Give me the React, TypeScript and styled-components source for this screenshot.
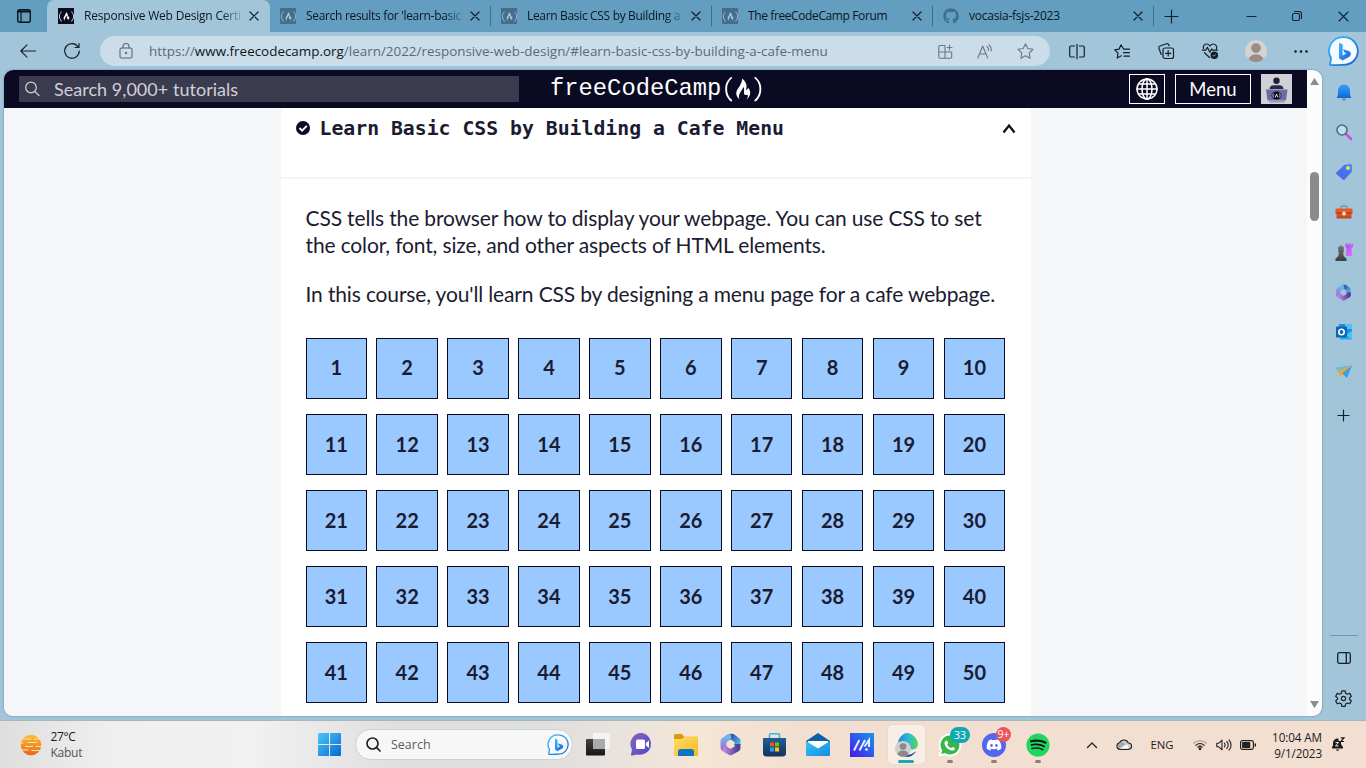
import React from "react";
import styled, { createGlobalStyle, css } from "styled-components";
import { FaFreeCodeCamp, FaGithub, FaDiscord, FaSpotify } from "react-icons/fa";

const ui = `"Open Sans", "Noto Sans", sans-serif`;
const lato = `Lato, "Open Sans", sans-serif`;

const Global = createGlobalStyle`
  * { box-sizing: border-box; }
  html, body { margin: 0; padding: 0; }
  body { width: 1366px; height: 768px; overflow: hidden; font-family: ${ui}; color: #111; }
  svg { display: block; flex: none; overflow: visible; }
`;

const Desktop = styled.div`
  width: 1366px;
  height: 768px;
  display: flex;
  flex-direction: column;
  overflow: hidden;
`;

/* ---------- browser chrome ---------- */

const TabStrip = styled.div`
  height: 32px;
  flex: none;
  display: flex;
  background: #639dc0;
`;

const StripButton = styled.div<{ $w: number }>`
  width: ${(p) => p.$w}px;
  display: flex;
  align-items: center;
  justify-content: center;
`;

const Tab = styled.div<{ $active?: boolean }>`
  width: 221px;
  flex: none;
  display: flex;
  align-items: center;
  padding: 0 8px 0 10px;
  position: relative;
  ${(p) =>
    p.$active
      ? css`
          width: 223px;
          padding: 0 8px 0 11px;
          background: #a3c5da;
          border-radius: 7px 7px 0 0;
        `
      : css`
          &::after {
            content: "";
            position: absolute;
            right: 0;
            top: 6px;
            width: 1px;
            height: 20px;
            background: #3f6d8a;
          }
        `}
`;

const Favicon = styled.div<{ $dim?: boolean }>`
  width: 16px;
  height: 16px;
  display: flex;
  align-items: center;
  justify-content: center;
  background: ${(p) => (p.$dim ? "#436e8d" : "#0a0a23")};
  color: ${(p) => (p.$dim ? "#a9c9dc" : "#fff")};
`;

const TabTitle = styled.div<{ $fade?: boolean; $spacing?: number }>`
  flex: 1;
  margin-left: 10px;
  font-size: 12px;
  line-height: 16px;
  letter-spacing: ${(p) => p.$spacing ?? 0}px;
  white-space: nowrap;
  color: #0b1720;
  ${(p) => p.$fade && css`mask-image: linear-gradient(90deg, #000 138px, transparent 160px);`}
`;

const TabClose = styled.div`
  width: 16px;
  display: flex;
  justify-content: center;
`;

const WindowControls = styled.div`
  margin-left: auto;
  display: flex;
`;

const Toolbar = styled.div`
  height: 38px;
  flex: none;
  display: flex;
  align-items: center;
  background: #a3c5da;
  padding-left: 6px;
`;

const ToolSlot = styled.div<{ $w?: number }>`
  width: ${(p) => p.$w ?? 44.8}px;
  flex: none;
  display: flex;
  align-items: center;
  justify-content: center;
`;

const AddressBar = styled.div`
  width: 950px;
  height: 30px;
  margin: 0 4.6px 0 6px;
  flex: none;
  display: flex;
  align-items: center;
  border-radius: 15px;
  background: #cbdde9;
  padding: 0 5px 0 19px;
`;

const Url = styled.div`
  margin-left: 16px;
  flex: 1;
  font-size: 13.4px;
  letter-spacing: 0.02px;
  color: #5b6b75;
  white-space: nowrap;
  b { font-weight: 400; color: #0c151b; }
`;

const Body = styled.div`
  height: 651px;
  flex: none;
  display: flex;
  background: #a3c5da;
  padding: 0 0 5px 4px;
  border-bottom: 1px solid #a9b6be;
`;

const Viewport = styled.div`
  width: 1318px;
  height: 646px;
  flex: none;
  display: flex;
  overflow: hidden;
  border-radius: 9px;
  background: #fcfcfd;
  box-shadow: 0 0 2px rgba(20, 50, 80, 0.5);
`;

const Page = styled.div`
  width: 1303px;
  display: flex;
  flex-direction: column;
  background: #f5f6f7;
`;

const ScrollTrack = styled.div`
  width: 15px;
  display: flex;
  flex-direction: column;
  align-items: center;
  justify-content: space-between;
  padding: 8px 0;
`;

const ScrollThumb = styled.div`
  width: 9px;
  height: 49px;
  margin: 87px 0 auto;
  border-radius: 5px;
  background: #8b8b8b;
`;

const Sidebar = styled.div`
  width: 43px;
  height: 648px;
  padding-top: 2px;
  display: flex;
  flex-direction: column;
  align-items: center;
`;

const SideSlot = styled.div<{ $h?: number }>`
  height: ${(p) => p.$h ?? 40}px;
  flex: none;
  display: flex;
  align-items: center;
  justify-content: center;
`;

const SideRule = styled.div`
  width: 28px;
  height: 1px;
  margin-top: auto;
  margin-bottom: 2px;
  background: #7397ac;
`;

/* ---------- site ---------- */

const SiteHeader = styled.header`
  height: 38px;
  flex: none;
  display: flex;
  align-items: center;
  background: #0a0a23;
  padding-left: 15px;
`;

const SearchField = styled.div`
  width: 500px;
  height: 26px;
  display: flex;
  align-items: center;
  background: #3b3b4f;
  color: #d0d0d5;
  font: 18px/26px ${lato};
  letter-spacing: 0.03px;
  padding-left: 5px;
  gap: 14px;
`;

const Logo = styled.div`
  margin-left: 31px;
  display: flex;
  align-items: center;
  color: #fff;
  font: 23.8px/30px "Liberation Mono", monospace;
`;

const LogoMark = styled.div`
  margin-left: 4px;
`;

const HeaderActions = styled.div`
  margin-left: auto;
  margin-right: 15px;
  display: flex;
  gap: 10px;
`;

const HeaderButton = styled.div<{ $w: number }>`
  width: ${(p) => p.$w}px;
  height: 30px;
  display: flex;
  align-items: center;
  justify-content: center;
  border: 1px solid #fff;
  color: #fff;
  font: 18.5px/26px ${lato};
`;

const UserPicture = styled.div`
  width: 31px;
  height: 30px;
  background: #d0d0d5;
`;

const Card = styled.main`
  width: 750px;
  flex: 1;
  margin-left: 277px;
  background: #fff;
`;

const BlockHeading = styled.div`
  height: 71px;
  display: flex;
  align-items: flex-start;
  padding: 8px 15px 0;
  border-bottom: 2px solid #f3f4f6;
  svg { margin-top: 5px; }
`;

const BlockTitle = styled.h3`
  flex: 1;
  margin: 1px 0 0 9.5px;
  font: bold 19.8px/24px "DejaVu Sans Mono", monospace;
  color: #1b1b32;
`;

const Intro = styled.div`
  padding: 25px 24.5px 0;
  height: 158.75px;
  p {
    margin: 0 0 22px;
    font: 21px/27px ${lato};
    letter-spacing: -0.145px;
    color: #1b1b32;
    white-space: nowrap;
  }
`;

const StepGrid = styled.div`
  display: grid;
  grid-template-columns: repeat(10, 61.5px);
  grid-auto-rows: 61.4px;
  gap: 14.7px 9.42px;
  padding-left: 24.5px;
`;

const Step = styled.div`
  display: flex;
  align-items: center;
  justify-content: center;
  padding-bottom: 2px;
  border: 1px solid #0a0a23;
  background: #99c9ff;
  font: bold 20px/24px ${lato};
  color: #1b1b32;
`;

/* ---------- taskbar ---------- */

const Taskbar = styled.div`
  height: 47px;
  flex: none;
  display: flex;
  align-items: center;
  color: #1b1b1b;
  background: linear-gradient(90deg, #dedede 0, #efefef 110px, #f1f1f1 250px, #dfdfdf 400px, #dedfdf 540px, #e9e3dd 620px, #f5e6d6 700px, #f2dfd0 800px, #f3dfd2 100%);
`;

const Weather = styled.div`
  width: 307px;
  display: flex;
  align-items: center;
  padding-left: 19px;
  gap: 7.5px;
  font-size: 12px;
  line-height: 16px;
  letter-spacing: -0.4px;
  span { display: block; color: #555; letter-spacing: -0.25px; }
`;

const TaskSearch = styled.div`
  width: 218px;
  height: 31px;
  margin: 0 3px 0 4px;
  display: flex;
  align-items: center;
  border-radius: 16px;
  background: #f7f7f7;
  border: 1px solid #cfcfcf;
  padding: 0 3px 0 10px;
  font-size: 12.5px;
  color: #5c5c5c;
  span { flex: 1; margin-left: 10px; }
`;

const AppSlot = styled.div`
  width: 44px;
  height: 47px;
  flex: none;
  position: relative;
  display: flex;
  align-items: center;
  justify-content: center;
`;

const ActivePlate = styled.div`
  width: 37px;
  height: 39px;
  display: flex;
  align-items: center;
  justify-content: center;
  border-radius: 4px;
  background: #f9eee6;
  box-shadow: 0 0 1px #c9b5a8;
`;

const Indicator = styled.div<{ $on?: boolean }>`
  position: absolute;
  bottom: 5px;
  width: ${(p) => (p.$on ? 16 : 6)}px;
  height: 3px;
  border-radius: 2px;
  background: ${(p) => (p.$on ? "#17a9ad" : "#8b7f78")};
`;

const Badge = styled.div<{ $c: string; $w: number; $l: number; $h: number }>`
  position: absolute;
  left: ${(p) => p.$l}px;
  top: 6px;
  width: ${(p) => p.$w}px;
  height: ${(p) => p.$h}px;
  border-radius: 8px;
  background: ${(p) => p.$c};
  color: #fff;
  font-size: 10.5px;
  line-height: ${(p) => p.$h}px;
  text-align: center;
`;

const TraySlot = styled.div<{ $w: number; $ml?: number }>`
  width: ${(p) => p.$w}px;
  margin-left: ${(p) => p.$ml ?? 0}px;
  flex: none;
  display: flex;
  align-items: center;
  justify-content: center;
  font-size: 11.3px;
`;

const Clock = styled.div`
  width: 62px;
  flex: none;
  font-size: 11.7px;
  line-height: 16px;
  letter-spacing: -0.1px;
  text-align: right;
  white-space: nowrap;
`;

/* ---------- icons ---------- */

type IconProps = {
  w: number;
  h?: number;
  sw?: number;
  stroke?: string;
  fill?: string;
  box?: string;
  children: React.ReactNode;
};

const Icon = ({ w, h = w, sw = 1.1, stroke = "#14212a", fill = "none", box, children }: IconProps) => (
  <svg
    width={w}
    height={h}
    viewBox={box ?? `0 0 ${w} ${h}`}
    fill={fill}
    stroke={stroke}
    strokeWidth={sw}
    strokeLinecap="round"
    strokeLinejoin="round"
  >
    {children}
  </svg>
);

const HiddenDefs = styled.svg`
  position: absolute;
`;

const Gradients = () => (
  <HiddenDefs width="0" height="0">
    <defs>
      <linearGradient id="bing" x1="0" y1="0" x2="1" y2="1">
        <stop offset="0" stopColor="#37bdfb" />
        <stop offset="1" stopColor="#1d5fd0" />
      </linearGradient>
      <linearGradient id="bell" x1="0" y1="0" x2="0" y2="1">
        <stop offset="0" stopColor="#35a0f4" />
        <stop offset="1" stopColor="#1267d8" />
      </linearGradient>
      <linearGradient id="tag" x1="0" y1="1" x2="1" y2="0">
        <stop offset="0" stopColor="#5b5fe6" />
        <stop offset="1" stopColor="#2f86f6" />
      </linearGradient>
      <linearGradient id="box" x1="0" y1="0" x2="0" y2="1">
        <stop offset="0" stopColor="#f0662c" />
        <stop offset="1" stopColor="#c03d12" />
      </linearGradient>
      <linearGradient id="pawn" x1="0" y1="0" x2="0" y2="1">
        <stop offset="0" stopColor="#777" />
        <stop offset="1" stopColor="#3d3d3d" />
      </linearGradient>
      <linearGradient id="rook" x1="0" y1="0" x2="1" y2="1">
        <stop offset="0" stopColor="#b04bf5" />
        <stop offset="1" stopColor="#d77bfa" />
      </linearGradient>
      <linearGradient id="win" x1="0" y1="0" x2="1" y2="1">
        <stop offset="0" stopColor="#4cc8fa" />
        <stop offset="1" stopColor="#0568cf" />
      </linearGradient>
      <linearGradient id="sun" x1="0" y1="0" x2="0" y2="1">
        <stop offset="0" stopColor="#fbc02d" />
        <stop offset="1" stopColor="#e8651c" />
      </linearGradient>
      <linearGradient id="chat" x1="0" y1="0" x2="1" y2="1">
        <stop offset="0" stopColor="#8a63b8" />
        <stop offset="1" stopColor="#4a4bd0" />
      </linearGradient>
      <linearGradient id="folder" x1="0" y1="0" x2="1" y2="1">
        <stop offset="0" stopColor="#ffdd67" />
        <stop offset="1" stopColor="#f6b91f" />
      </linearGradient>
      <linearGradient id="store" x1="0" y1="0" x2="0" y2="1">
        <stop offset="0" stopColor="#1d5f99" />
        <stop offset="1" stopColor="#16325c" />
      </linearGradient>
      <linearGradient id="mail" x1="0" y1="0" x2="1" y2="1">
        <stop offset="0" stopColor="#38c6f8" />
        <stop offset="1" stopColor="#138ade" />
      </linearGradient>
      <linearGradient id="asus" x1="0" y1="1" x2="1" y2="0">
        <stop offset="0" stopColor="#4a17e6" />
        <stop offset="1" stopColor="#1496f5" />
      </linearGradient>
      <linearGradient id="edge" x1="0" y1="0" x2="1" y2="0">
        <stop offset="0" stopColor="#1b87d8" />
        <stop offset="0.5" stopColor="#27b9d8" />
        <stop offset="1" stopColor="#5fd75a" />
      </linearGradient>
      <linearGradient id="taskdark" x1="0" y1="0" x2="0" y2="1">
        <stop offset="0" stopColor="#444" />
        <stop offset="1" stopColor="#161616" />
      </linearGradient>
      <linearGradient id="m365a" x1="0" y1="0" x2="1" y2="1">
        <stop offset="0" stopColor="#27509f" />
        <stop offset="1" stopColor="#55b4ee" />
      </linearGradient>
      <linearGradient id="m365b" x1="0" y1="0" x2="0" y2="1">
        <stop offset="0" stopColor="#6fb8ee" />
        <stop offset="1" stopColor="#a66bd2" />
      </linearGradient>
      <linearGradient id="m365c" x1="0" y1="0" x2="1" y2="0">
        <stop offset="0" stopColor="#c58ae0" />
        <stop offset="1" stopColor="#54409c" />
      </linearGradient>
    </defs>
  </HiddenDefs>
);

const Close = ({ s = 8, sw = 1.2 }: { s?: number; sw?: number }) => (
  <Icon w={s} sw={sw}>
    <path d={`M0 0L${s} ${s}M${s} 0L0 ${s}`} />
  </Icon>
);

const BingB = ({ s }: { s: number }) => (
  <svg width={s} height={s} viewBox="0 0 30 30">
    <path d="M15 1.2a13.8 13.8 0 1 1 0 27.6c-3 0-6 .6-13 .2c-.8 0-1-.5-.8-1.1L2 22A13.8 13.8 0 0 1 15 1.2z" fill="#f4faff" stroke="url(#bing)" strokeWidth="1.8" />
    <path d="M10 6.8l3.6 1.4v11.3l3.6-2.1-1.9-.9-1.4-3.4 6.4 2.2c2 1.2 1.9 4.3 0 5.5l-6.8 3.7-3.5-2.3z" fill="url(#bing)" />
  </svg>
);

const Microsoft365 = ({ s }: { s: number }) => (
  <svg width={s} height={s} viewBox="0 0 24 24" fill="none" strokeWidth="6.2" strokeLinejoin="round">
    <path d="M10 4.200L14 4L19.300 8V13" stroke="url(#m365a)" />
    <path d="M12.500 3.800L10 4.200L4.700 8.200V15.500L8 17.500" stroke="url(#m365b)" />
    <path d="M4.700 16L12 20.200L19.300 16V11.500" stroke="url(#m365c)" />
  </svg>
);

const TabFavicon = ({ dim }: { dim?: boolean }) => (
  <Favicon $dim={dim}>
    <FaFreeCodeCamp size={15} />
  </Favicon>
);

const tabs = [
  { title: "Search results for 'learn-basic", fade: true, spacing: -0.32 },
  { title: "Learn Basic CSS by Building a", fade: true, spacing: -0.33 },
  { title: "The freeCodeCamp Forum", fade: false, spacing: -0.39 },
];

const Chrome = () => (
  <>
    <TabStrip>
      <StripButton $w={47}>
        <Icon w={14} sw={1.4} stroke="#0b1318">
          <rect x="0.7" y="0.7" width="12.6" height="12.6" rx="2" />
          <path d="M1.500 2.500h11" strokeWidth="2" />
          <path d="M4 3v10" strokeWidth="1.200" />
        </Icon>
      </StripButton>
      <Tab $active>
        <TabFavicon />
        <TabTitle $fade $spacing={-0.2}>Responsive Web Design Certi</TabTitle>
        <TabClose><Close /></TabClose>
      </Tab>
      {tabs.map((t) => (
        <Tab key={t.title}>
          <TabFavicon dim />
          <TabTitle $fade={t.fade} $spacing={t.spacing}>{t.title}</TabTitle>
          <TabClose><Close /></TabClose>
        </Tab>
      ))}
      <Tab>
        <FaGithub size={16} color="#3f7092" />
        <TabTitle $spacing={-0.23}>vocasia-fsjs-2023</TabTitle>
        <TabClose><Close /></TabClose>
      </Tab>
      <StripButton $w={34}>
        <Icon w={13} sw={1.2}><path d="M6.5 0v13M0 6.5h13" /></Icon>
      </StripButton>
      <WindowControls>
        <StripButton $w={46}><Icon w={9} h={1} sw={1.2}><path d="M0 .5h9" /></Icon></StripButton>
        <StripButton $w={46}>
          <Icon w={10}>
            <rect x="0.5" y="2.5" width="7" height="7" rx="1.5" />
            <path d="M2.5 .5h4.5a2.5 2.5 0 0 1 2.5 2.5v4.5" />
          </Icon>
        </StripButton>
        <StripButton $w={46}><Close s={9} sw={1.1} /></StripButton>
      </WindowControls>
    </TabStrip>

    <Toolbar>
      <ToolSlot $w={44}>
        <Icon w={16} h={14}><path d="M15.5 7H.8M7 .8L.8 7L7 13.2" /></Icon>
      </ToolSlot>
      <ToolSlot $w={44}>
        <Icon w={16} sw={1.2}><path d="M14.2 4A7.300 7.300 0 1 0 15.300 8M15 .5V4.500H11" /></Icon>
      </ToolSlot>
      <AddressBar>
        <Icon w={14} h={16} stroke="#5d6a73">
          <rect x="1" y="5" width="12" height="10" rx="1.5" />
          <path d="M4 5V3.500a3 3 0 0 1 6 0V5" />
          <circle cx="7" cy="10" r=".6" fill="#5d6a73" />
        </Icon>
        <Url>https://<b>www.freecodecamp.org</b>/learn/2022/responsive-web-design/#learn-basic-css-by-building-a-cafe-menu</Url>
        <ToolSlot $w={40}>
          <Icon w={15} stroke="#6b7a84">
            <path d="M7 1.5H2a1.2 1.2 0 0 0-1.2 1.2V13a1.2 1.2 0 0 0 1.2 1.2h10.5a1.2 1.2 0 0 0 1.2-1.2V8H.8M7 1.5V14M11.5 1v5M9 3.5h5" />
          </Icon>
        </ToolSlot>
        <ToolSlot $w={40}>
          <Icon w={16} h={15} stroke="#6b7a84">
            <path d="M.8 14L5.700 2L10.600 14M2.500 10h6.400M10 2.500a4 4 0 0 1 1.500 4M12 .8a7 7 0 0 1 2.200 6.200" />
          </Icon>
        </ToolSlot>
        <ToolSlot $w={40}>
          <Icon w={17} h={16} stroke="#6b7a84">
            <path d="M8.500.8l2.300 4.700 5.200.8-3.800 3.700.9 5.200-4.600-2.500-4.600 2.500.9-5.200L1 6.300l5.200-.8z" />
          </Icon>
        </ToolSlot>
      </AddressBar>
      <ToolSlot>
        <Icon w={16} h={15} sw={1.2}>
          <path d="M5.500 2H2a1.300 1.300 0 0 0-1.300 1.300v8.400A1.300 1.300 0 0 0 2 13h3.500M10.500 2H14a1.300 1.300 0 0 1 1.300 1.300v8.400A1.300 1.300 0 0 1 14 13h-3.500M8 .3v14.400" />
        </Icon>
      </ToolSlot>
      <ToolSlot>
        <Icon w={16} h={15} sw={1.2}>
          <path d="M9.500 5L7 .8L5 5.200L.7 5.900L4 9.200L3.200 14L7.300 11.800M10 5.200h5.500M9.500 8.700h6M10 12.200h5.500" />
        </Icon>
      </ToolSlot>
      <ToolSlot $w={43.5}>
        <Icon w={16} sw={1.2}>
          <rect x="5" y="5" width="10.5" height="10.5" rx="2" />
          <path d="M10.200 7.700v5.200M7.600 10.300h5.200M3.200 11.500L.9 5.200c-.3-1 0-1.800 1-2.200L8.500.8c1-.3 1.800 0 2.200 1l.4 1" />
        </Icon>
      </ToolSlot>
      <ToolSlot $w={44.8}>
        <Icon w={16} sw={1.2}>
          <path d="M1.500 5.500C.6 2.600 3 .8 5 1c1.500.2 2.400 1 3 2 .6-1 1.500-1.800 3-2 2.400-.1 4.500 2 3.500 4.800M.3 7.200h3.500l1.600-3 2.500 5 1.700-3.200 1 1.200h5M2.500 9.700l5 4.800" />
          <circle cx="12.300" cy="12.300" r="3.200" fill="#101b22" />
          <path d="M10.900 12.300l1 1 1.700-1.800" stroke="#a3c5da" strokeWidth=".8" />
        </Icon>
      </ToolSlot>
      <ToolSlot $w={46.1}>
        <svg width="22" height="22" viewBox="0 0 22 22">
          <clipPath id="av"><circle cx="11" cy="11" r="11" /></clipPath>
          <g clipPath="url(#av)">
            <rect width="22" height="22" fill="#d6d2cf" />
            <circle cx="11" cy="8" r="4.800" fill="#958d88" />
            <path d="M3 22c0-5 3.500-7.500 8-7.500s8 2.500 8 7.500z" fill="#958d88" />
          </g>
        </svg>
      </ToolSlot>
      <ToolSlot>
        <Icon w={14} h={3} stroke="none" fill="#101b22">
          <circle cx="1.500" cy="1.500" r="1.300" /><circle cx="7" cy="1.500" r="1.300" /><circle cx="12.500" cy="1.500" r="1.300" />
        </Icon>
      </ToolSlot>
      <ToolSlot $w={41}><BingB s={30} /></ToolSlot>
    </Toolbar>
  </>
);

const EdgeSidebar = () => (
  <Sidebar>
    <SideSlot>
      <svg width="14" height="17" viewBox="0 0 14 17">
        <path d="M5 14.500a2 2 0 0 0 4 0z" fill="#6f7f8d" />
        <path d="M7 .5a6 6 0 0 1 6 6v4l1 2.500c.2.600-.1 1-.6 1H.6c-.5 0-.8-.4-.6-1L1 10.500v-4a6 6 0 0 1 6-6z" fill="url(#bell)" />
      </svg>
    </SideSlot>
    <SideSlot>
      <svg width="16" height="16" viewBox="0 0 16 16">
        <path d="M10 10l5 5" stroke="#d04be0" strokeWidth="2.600" strokeLinecap="round" />
        <circle cx="6" cy="6" r="5" fill="#b9dff0" stroke="#5d676e" strokeWidth="1.600" />
      </svg>
    </SideSlot>
    <SideSlot>
      <svg width="16" height="16" viewBox="0 0 16 16">
        <path d="M9 .8L15 .3c.5 0 .8.300.8.800V7c0 .6-.2 1-.6 1.500l-6.400 7c-.7.700-1.500.600-2.100 0L.6 10.300c-.6-.7-.6-1.500 0-2.100L7.600 1.400C8 1 8.500.8 9 .8z" fill="url(#tag)" />
        <circle cx="12" cy="4" r="2" fill="#fbd65b" />
      </svg>
    </SideSlot>
    <SideSlot>
      <svg width="18" height="15" viewBox="0 0 18 15">
        <path d="M6 4V2.500A1.500 1.500 0 0 1 7.500 1h3A1.500 1.500 0 0 1 12 2.500V4" fill="none" stroke="#8b8f90" strokeWidth="1.400" />
        <path d="M1.500 7h15v5.500a1 1 0 0 1-1 1h-13a1 1 0 0 1-1-1z" fill="url(#box)" />
        <path d="M.5 4.500a1 1 0 0 1 1-1h15a1 1 0 0 1 1 1V8H.5z" fill="#e8592a" />
        <path d="M.5 7.500h17v1H.5z" fill="#9a3010" />
        <rect x="7.200" y="6.500" width="3.600" height="4" rx="1.500" fill="#e6ddd6" />
      </svg>
    </SideSlot>
    <SideSlot>
      <svg width="18" height="18" viewBox="0 0 18 18">
        <path d="M10.500 .5h2v1.300h1.200V.5h1.800v1.300h1V.5h1.500V4l-1.500 1.500.5 5.500 1 2h-7l.5-7.500-1-1.500z" fill="url(#rook)" />
        <path d="M6 2.500a3 3 0 0 1 2.200 5h.8v1.700H8l.8 4 2.700 2.200V18H.5v-2.600l2.700-2.200.8-4H3V7.500h.8A3 3 0 0 1 6 2.500z" fill="url(#pawn)" />
      </svg>
    </SideSlot>
    <SideSlot><Microsoft365 s={17} /></SideSlot>
    <SideSlot>
      <svg width="16" height="16" viewBox="0 0 16 16">
        <rect x="3" width="13" height="10" fill="#1b8fdc" /><path d="M9 0h7v5H9z" fill="#4fc4f2" />
        <path d="M4 7l6 4 6-4v8.500H4z" fill="#28a8ea" /><path d="M10 11l6-4v8.500z" fill="#46c5f5" />
        <rect y="2.500" width="11" height="11" rx="1" fill="#0867b8" />
        <circle cx="5.500" cy="8" r="2.700" fill="none" stroke="#fff" strokeWidth="1.600" />
      </svg>
    </SideSlot>
    <SideSlot>
      <svg width="17" height="14" viewBox="0 0 17 14">
        <path d="M.5 3L17 .5 12 13 6.500 8z" fill="#3aa0e4" />
        <path d="M.5 3L17 .5 4.500 7.500z" fill="#5cc0f0" />
        <path d="M2.500 6L17 .5 6.800 8.500 5.500 13z" fill="#f2a72e" />
      </svg>
    </SideSlot>
    <SideSlot $h={47}><Icon w={11} sw={1.2}><path d="M5.500 0v11M0 5.500h11" /></Icon></SideSlot>
    <SideRule />
    <SideSlot>
      <Icon w={14} h={12} sw={1.3}>
        <rect x=".7" y=".7" width="12.600" height="10.600" rx="1.800" /><path d="M9.300 1v10" />
      </Icon>
    </SideSlot>
    <SideSlot>
      <Icon w={17} box="1.5 1.5 21 21" sw={1.5}>
        <path d="M10 2.500h4l.7 3 2 1.200 3-1 2 3.500-2.300 2v1.800l2.300 2-2 3.500-3-1-2 1.200-.7 3h-4l-.7-3-2-1.200-3 1-2-3.500 2.300-2v-1.800l-2.300-2 2-3.500 3 1 2-1.200z" />
        <circle cx="12" cy="12" r="2.600" />
      </Icon>
    </SideSlot>
  </Sidebar>
);

const Site = () => (
  <Page>
    <SiteHeader>
      <SearchField>
        <Icon w={16} stroke="#d0d0d5" sw={1.2}><circle cx="7" cy="6.500" r="5.300" /><path d="M10.800 10.300L15 14.500" /></Icon>
        Search 9,000+ tutorials
      </SearchField>
      <Logo>
        freeCodeCamp
        <LogoMark><FaFreeCodeCamp size={36.5} /></LogoMark>
      </Logo>
      <HeaderActions>
        <HeaderButton $w={36}>
          <Icon w={22} stroke="#fff" sw={1.5}>
            <circle cx="11" cy="11" r="10" /><ellipse cx="11" cy="11" rx="5" ry="10" />
            <path d="M11 1v20M1 11h20M2.500 6h17M2.500 16h17" />
          </Icon>
        </HeaderButton>
        <HeaderButton $w={76}>Menu</HeaderButton>
        <UserPicture>
          <svg width="31" height="30" viewBox="0 0 31 30">
            <circle cx="15.500" cy="6.800" r="3.200" fill="#1f1f3d" />
            <path d="M8.500 15c.3-2.500 1.500-3.500 4-3.800h6c2.500.3 3.700 1.300 4 3.800z" fill="#2a2a4d" />
            <path d="M5 15.500h21.500l-1.500 11H6.500z" fill="#6f6aa3" />
            <path d="M8 27h15.500v1.500H8z" fill="#9a97bd" />
            <ellipse cx="15.500" cy="21.500" rx="5" ry="4" fill="#0a0a23" />
            <path d="M12.500 19.500c-.8 1.200-.8 2.800 0 4M18.500 19.500c.8 1.200.8 2.800 0 4M14.300 23.300l1.200-3.300 1.200 3.300" fill="none" stroke="#fff" strokeWidth=".9" />
          </svg>
        </UserPicture>
      </HeaderActions>
    </SiteHeader>
    <Card>
      <BlockHeading>
        <svg width="14" height="14" viewBox="0 0 14 14">
          <circle cx="7" cy="7" r="7" fill="#0a0a23" />
          <path d="M3.500 7l2.600 2.600L10.800 4.800" fill="none" stroke="#fff" strokeWidth="1.900" />
        </svg>
        <BlockTitle>Learn Basic CSS by Building a Cafe Menu</BlockTitle>
        <svg width="14" height="14" viewBox="0 0 14 14">
          <path d="M1.500 11.500L7 4.500l5.500 7" fill="none" stroke="#0a0a23" strokeWidth="2.200" />
        </svg>
      </BlockHeading>
      <Intro>
        <p>CSS tells the browser how to display your webpage. You can use CSS to set<br />the color, font, size, and other aspects of HTML elements.</p>
        <p>In this course, you'll learn CSS by designing a menu page for a cafe webpage.</p>
      </Intro>
      <StepGrid>
        {Array.from({ length: 50 }, (_, i) => <Step key={i}>{i + 1}</Step>)}
      </StepGrid>
    </Card>
  </Page>
);

const WindowsTaskbar = () => (
  <Taskbar>
    <Weather>
      <svg width="24" height="22" viewBox="0 0 24 22">
        <circle cx="12" cy="11" r="10.300" fill="url(#sun)" />
        <path d="M4 5h8M15 5h8M0 9h4M9 8.500h8M6.500 12.500h7M17 12.500h5M1 16h8M13 16.500h7" stroke="#fbe3b4" strokeWidth="1.200" strokeLinecap="round" />
      </svg>
      <div>27°C<span>Kabut</span></div>
    </Weather>
    <AppSlot>
      <svg width="23" height="23" viewBox="0 0 23 23" fill="url(#win)">
        <path d="M0 1a1 1 0 0 1 1-1h10v11H0zM12 0h10a1 1 0 0 1 1 1v10H12zM0 12h11v11H1a1 1 0 0 1-1-1zM12 12h11v10a1 1 0 0 1-1 1H12z" />
      </svg>
    </AppSlot>
    <TaskSearch>
      <Icon w={15} stroke="#222" sw={1.7}><circle cx="6.500" cy="6.500" r="5.500" /><path d="M10.700 10.700L14 14" /></Icon>
      <span>Search</span>
      <BingB s={21} />
    </TaskSearch>
    <AppSlot>
      <svg width="24" height="23" viewBox="0 0 24 23">
        <rect x="7" y="0" width="17" height="16" rx="1" fill="#f4f4f4" />
        <rect x="0" y="6" width="19" height="16.500" rx="1" fill="url(#taskdark)" />
        <rect x="7" y="6" width="12" height="10" fill="#aaa" />
      </svg>
    </AppSlot>
    <AppSlot>
      <svg width="24" height="23" viewBox="0 0 24 23">
        <path d="M12.500 0a11 11 0 1 1-5 21.500L2 22.500c-.8.100-1.200-.3-1-1L2 16.500A11 11 0 0 1 12.500 0z" fill="url(#chat)" />
        <rect x="6" y="6.500" width="9" height="9.500" rx="1.500" fill="#fff" />
        <path d="M16 10l3-2.500v7.500l-3-2.500z" fill="#fff" />
      </svg>
    </AppSlot>
    <AppSlot>
      <svg width="24" height="22" viewBox="0 0 24 22">
        <path d="M0 1.500A1.500 1.500 0 0 1 1.500 0H8l2.500 3H24v5H0z" fill="#d79a15" />
        <path d="M0 5h8l2.500-2.500H23a1 1 0 0 1 1 1V21a1 1 0 0 1-1 1H1a1 1 0 0 1-1-1z" fill="url(#folder)" />
        <path d="M4 22v-4.500A2.500 2.500 0 0 1 6.500 15h11a2.500 2.500 0 0 1 2.500 2.500V22z" fill="#1173c4" />
      </svg>
    </AppSlot>
    <AppSlot><Microsoft365 s={23} /></AppSlot>
    <AppSlot>
      <svg width="23" height="24" viewBox="0 0 23 24">
        <path d="M6.500 5V2a1.200 1.200 0 0 1 1.200-1.200h7.600A1.200 1.200 0 0 1 16.500 2v3" fill="none" stroke="#35b8e8" strokeWidth="1.600" />
        <path d="M0 5h23v15a3.500 3.500 0 0 1-3.500 3.500h-16A3.500 3.500 0 0 1 0 20z" fill="url(#store)" />
        <path d="M7 9.500h4v4H7z" fill="#f25022" /><path d="M12 9.500h4v4h-4z" fill="#7fba00" />
        <path d="M7 14.500h4v4H7z" fill="#1ba1f3" /><path d="M12 14.500h4v4h-4z" fill="#ffc31a" />
      </svg>
    </AppSlot>
    <AppSlot>
      <svg width="24" height="23" viewBox="0 0 24 23">
        <path d="M0 8L12 0l12 8v5H0z" fill="#0f5ea8" />
        <path d="M2 8h20v4l-10 5-10-5z" fill="#fff" />
        <path d="M0 8l12 7.500L24 8v14a1 1 0 0 1-1 1H1a1 1 0 0 1-1-1z" fill="url(#mail)" />
      </svg>
    </AppSlot>
    <AppSlot>
      <svg width="24" height="24" viewBox="0 0 24 24">
        <rect width="24" height="24" fill="url(#asus)" />
        <path d="M4 17.500L9.300 7M9.500 17.500L15 7M14.500 13.500L19 7V14" fill="none" stroke="#e9ecff" strokeWidth="2" />
        <circle cx="16.500" cy="16.500" r="1.300" fill="#fff" />
      </svg>
    </AppSlot>
    <AppSlot>
      <ActivePlate>
        <svg width="24" height="24" viewBox="0 0 24 24">
          <path d="M12 0a12 12 0 0 1 12 11c0 4-3 5.500-6 5.500-2 0-3-.5-3-1.500 0-3-1-5-4-5-5 0-6 5-4 9.500A12 12 0 0 1 12 0z" fill="url(#edge)" />
          <path d="M7 19c3 3 9 4.500 15-.8-2 4-6 5.800-10 5.800-3 0-5-2-5-5z" fill="#0f4d92" />
          <circle cx="9" cy="16" r="8" fill="#cfcfcf" />
          <circle cx="9" cy="13.500" r="3.300" fill="#8d8885" />
          <path d="M3.500 21.500c.4-3 2.600-4 5.500-4s5.100 1 5.500 4a8 8 0 0 1-11 0z" fill="#8d8885" />
        </svg>
      </ActivePlate>
      <Indicator $on />
    </AppSlot>
    <AppSlot>
      <svg width="24" height="24" viewBox="0 0 24 24">
        <path d="M12 .5a11.500 11.500 0 1 1-5.500 21.700L.5 23.500l1.500-6A11.500 11.500 0 0 1 12 .5z" fill="#fff" />
        <path d="M12 2.500a9.500 9.500 0 1 1-5 17.600L3.200 21l1-3.700A9.500 9.500 0 0 1 12 2.500z" fill="#37b64c" />
        <path d="M9 7.500l1.200 2.700-1 1.300c1 1.800 2.100 2.800 3.900 3.700l1.300-1.300 2.600 1.200c0 1.800-1.500 2.700-3 2.500-4-.5-7.300-4-7.500-7.500 0-1.500 1.300-2.900 2.500-2.600z" fill="#fff" />
      </svg>
      <Badge $c="#0fa9b4" $w={20} $l={22} $h={16}>33</Badge>
      <Indicator />
    </AppSlot>
    <AppSlot>
      <svg width="24" height="24" viewBox="0 0 24 24">
        <circle cx="12" cy="12" r="12" fill="#5465f0" />
        <FaDiscord x="4" y="4" size={16} color="#fff" />
      </svg>
      <Badge $c="#e8555a" $w={15} $l={24} $h={15}>9+</Badge>
      <Indicator />
    </AppSlot>
    <AppSlot>
      <svg width="24" height="24" viewBox="0 0 24 24">
        <circle cx="12" cy="12" r="10" fill="#121212" />
        <FaSpotify size={24} color="#1ed760" />
      </svg>
      <Indicator />
    </AppSlot>
    <TraySlot $w={32} $ml={16}><Icon w={10} h={6} stroke="#222" sw={1.3}><path d="M.5 5.500L5 1l4.500 4.500" /></Icon></TraySlot>
    <TraySlot $w={32}>
      <svg width="16" height="11" viewBox="0 0 16 11">
        <path d="M4 10.400a3.300 3.300 0 0 1-.5-6.500A4.800 4.800 0 0 1 12.300 4a3.200 3.200 0 0 1 .2 6.400z" fill="#c9ccd0" stroke="#222" strokeWidth="1.100" />
        <path d="M1.500 7.500C3 3 6 2.500 8 4l4 5H3z" fill="#a4a8ad" />
        <path d="M3.500 9.800L9.500 5.500a3 3 0 0 1 3 4.300z" fill="#f4f4f4" />
      </svg>
    </TraySlot>
    <TraySlot $w={44}>ENG</TraySlot>
    <TraySlot $w={24} $ml={4}>
      <Icon w={14} h={11} stroke="#222" sw={1.1}>
        <path d="M.8 4.200a9 9 0 0 1 12.400 0" stroke="#9a9088" /><path d="M2.700 6.300a6.200 6.200 0 0 1 8.600 0M4.700 8.200a3.300 3.300 0 0 1 4.600 0" />
        <circle cx="7" cy="9.800" r=".9" fill="#222" />
      </Icon>
    </TraySlot>
    <TraySlot $w={24}>
      <Icon w={16} h={12} stroke="#222">
        <path d="M.8 4.200h2L6 1.200v9.600L2.800 7.800h-2zM8.500 4.200a3 3 0 0 1 0 3.600M10.800 2.500a5 5 0 0 1 0 7M13 .8a7.500 7.500 0 0 1 0 10.400" />
      </Icon>
    </TraySlot>
    <TraySlot $w={24}>
      <Icon w={16} h={10} stroke="#222" sw={1.2}>
        <rect x=".6" y=".6" width="12.800" height="8.800" rx="1.800" /><rect x="2.700" y="2.700" width="7" height="4.600" fill="#222" /><path d="M15.300 4v2" strokeWidth="1.400" />
      </Icon>
    </TraySlot>
    <Clock>10:04 AM<br />9/1/2023</Clock>
    <TraySlot $w={32}>
      <svg width="14" height="15" viewBox="0 0 14 15">
        <path d="M1 11.500V10l1-1.200V6a4.500 4.500 0 0 1 5.500-4.400V4H10v3l1 1.800 1 1.200v1.500z" fill="#1a1a1a" />
        <path d="M4.800 12.500a1.900 1.900 0 0 0 3.600 0z" fill="#1a1a1a" />
        <path d="M4.500 5.500h3l-3 3.500h3" fill="none" stroke="#f3dfd2" />
        <path d="M9.800.8h3.200l-3.200 3.700H13" fill="none" stroke="#1a1a1a" strokeWidth="1.200" />
      </svg>
    </TraySlot>
  </Taskbar>
);

export default function App() {
  return (
    <Desktop>
      <Global />
      <Gradients />
      <Chrome />
      <Body>
        <Viewport>
          <Site />
          <ScrollTrack>
            <Icon w={9} h={7} stroke="none" fill="#8b8b8b"><path d="M4.500 0L9 7H0z" /></Icon>
            <ScrollThumb />
            <Icon w={9} h={7} stroke="none" fill="#8b8b8b"><path d="M4.500 7L9 0H0z" /></Icon>
          </ScrollTrack>
        </Viewport>
        <EdgeSidebar />
      </Body>
      <WindowsTaskbar />
    </Desktop>
  );
}
